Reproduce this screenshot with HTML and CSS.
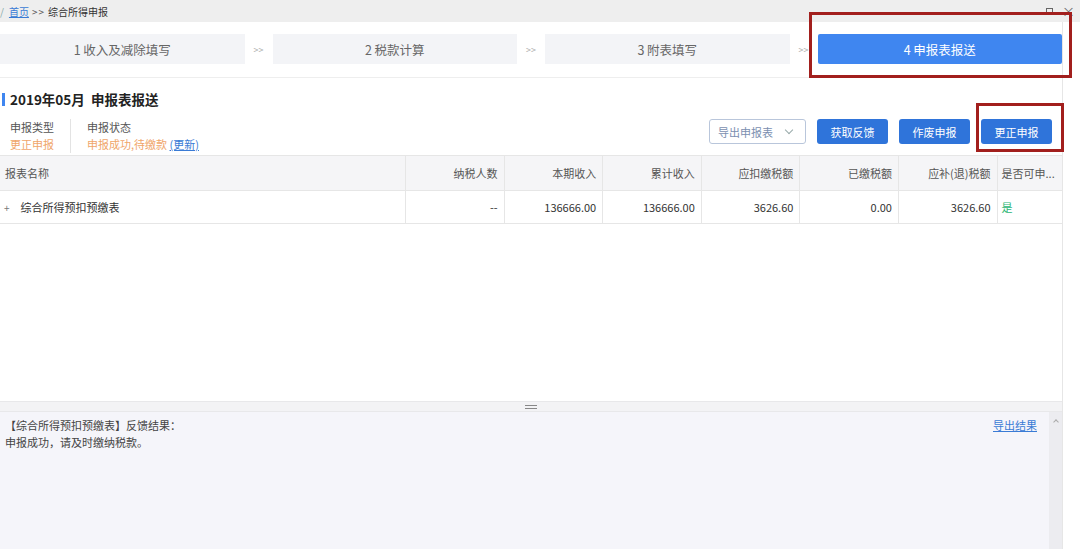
FILE: index.html
```html
<!DOCTYPE html>
<html lang="zh">
<head>
<meta charset="utf-8">
<link rel="stylesheet" href="styles.css">
</head>
<body>
<div class="topbar">
  <div class="crumbs"><span class="slash">/</span><a class="home">首页</a><span class="sep">&gt;&gt;</span><span>综合所得申报</span></div>
  <div class="winctl"><span class="max"></span><span class="close">×</span></div>
</div>
<div class="page">
  <div class="steps">
    <div class="step">1 收入及减除填写</div>
    <div class="arrow">&gt;&gt;</div>
    <div class="step">2 税款计算</div>
    <div class="arrow">&gt;&gt;</div>
    <div class="step">3 附表填写</div>
    <div class="arrow">&gt;&gt;</div>
    <div class="step active">4 申报表报送</div>
    <div class="mark mark-step"></div>
  </div>
  <div class="title"><span class="bar"></span>2019年05月&nbsp;&nbsp;申报表报送</div>
  <div class="info">
    <div class="field">
      <div class="lbl">申报类型</div>
      <div class="val">更正申报</div>
    </div>
    <div class="field sep-left">
      <div class="lbl">申报状态</div>
      <div class="val">申报成功,待缴款 <a class="update">(更新)</a></div>
    </div>
    <div class="actions">
      <div class="btn outline">导出申报表<span class="caret"></span></div>
      <div class="btn primary">获取反馈</div>
      <div class="btn primary">作废申报</div>
      <div class="btn primary">更正申报</div>
      <div class="mark mark-btn"></div>
    </div>
  </div>
  <div class="table">
    <div class="tr th">
      <div class="c c-name">报表名称</div>
      <div class="c c-n">纳税人数</div>
      <div class="c c-n">本期收入</div>
      <div class="c c-n">累计收入</div>
      <div class="c c-n">应扣缴税额</div>
      <div class="c c-n">已缴税额</div>
      <div class="c c-n">应补(退)税额</div>
      <div class="c c-last">是否可申...</div>
    </div>
    <div class="tr td">
      <div class="c c-name"><span class="plus">+</span>综合所得预扣预缴表</div>
      <div class="c c-n">--</div>
      <div class="c c-n">136666.00</div>
      <div class="c c-n">136666.00</div>
      <div class="c c-n">3626.60</div>
      <div class="c c-n">0.00</div>
      <div class="c c-n">3626.60</div>
      <div class="c c-last yes">是</div>
    </div>
  </div>
  <div class="blank"></div>
  <div class="splitter"><span class="grip"></span></div>
  <div class="result">
    <div class="result-text">
      <div class="line">【综合所得预扣预缴表】反馈结果：<a class="export">导出结果</a></div>
      <div class="line">申报成功，请及时缴纳税款。</div>
    </div>
    <div class="scroll"><span class="up"></span></div>
  </div>
</div>
</body>
</html>
```

FILE: styles.css
```css
* { box-sizing: border-box; }
html, body { margin: 0; padding: 0; }
body {
  width: 1080px;
  height: 549px;
  overflow: hidden;
  background: #ffffff;
  font-family: "Noto Sans CJK SC", "Noto Sans", sans-serif;
  color: #333;
}
a { text-decoration: none; }

.topbar {
  height: 22px;
  background: #eeeeee;
  display: flex;
  align-items: center;
  justify-content: space-between;
  font-size: 10px;
  color: #333;
}
.crumbs { display: flex; align-items: center; gap: 3px; }
.slash { color: #8aa; margin-right: 2px; }
.home { color: #3a7bd5; text-decoration: underline; }
.sep { color: #555; letter-spacing: 1px; }
.winctl { display: flex; align-items: center; gap: 9px; padding-right: 5px; color: #555; }
.max { width: 7px; height: 7px; border: 1.5px solid #666; }
.close { font-size: 13px; line-height: 10px; color: #666; }

.page {
  width: 1063px;
  border-right: 1px solid #e6e6e6;
  display: flex;
  flex-direction: column;
  height: 527px;
}

.steps {
  position: relative;
  display: flex;
  align-items: center;
  padding: 12px 0 13px;
  border-bottom: 1px solid #eeeeee;
  height: 56px;
}
.step {
  flex: 1;
  height: 30px;
  background: #f3f4f7;
  color: #666;
  font-size: 12.5px;
  display: flex;
  align-items: center;
  justify-content: center;
}
.step.active {
  background: #3f86f0;
  color: #fff;
  border-radius: 2px;
}
.arrow {
  width: 28px;
  text-align: center;
  font-size: 9px;
  color: #aaa;
}
.mark {
  position: absolute;
  border: 3px solid #a21f1d;
  pointer-events: none;
}
.mark-step { left: 809px; top: -10px; width: 263px; height: 66px; }

.title {
  display: flex;
  align-items: center;
  height: 40px;
  padding-top: 2px;
  font-size: 13.5px;
  font-weight: bold;
  color: #222;
  padding-left: 2px;
}
.bar {
  width: 3px;
  height: 13px;
  background: #3f86f0;
  margin-right: 5px;
}

.info {
  display: flex;
  align-items: flex-start;
  height: 37px;
  position: relative;
}
.field {
  padding-left: 10px;
  padding-right: 16px;
  font-size: 11px;
  line-height: 17px;
  margin-top: 1px;
}
.sep-left { border-left: 1px solid #e3e3e3; padding-left: 16px; margin-left: 0; }
.lbl { color: #555; }
.val { color: #f0a56a; }
.update { color: #3a7bd5; text-decoration: underline; }
.actions {
  margin-left: auto;
  display: flex;
  gap: 11px;
  padding-right: 10px;
  position: relative;
  padding-top: 1px;
}
.btn {
  height: 25px;
  width: 71px;
  border-radius: 3px;
  font-size: 11px;
  display: flex;
  align-items: center;
  justify-content: center;
}
.btn.primary { background: #2f74da; color: #fff; }
.btn.outline {
  width: 97px;
  border: 1px solid #b9c6db;
  color: #7b8fb0;
  background: #fff;
  justify-content: flex-start;
  padding-left: 8px;
}
.caret {
  width: 6px; height: 6px;
  border-right: 1px solid #9aa;
  border-bottom: 1px solid #9aa;
  transform: rotate(45deg);
  margin-left: 13px;
  margin-top: -3px;
}
.mark-btn { right: -2px; top: -15px; width: 88px; height: 49px; }

.table { font-size: 11px; color: #333; }
.tr { display: flex; border-top: 1px solid #e6e6e6; }
.th { height: 35px; background: #f5f5f7; color: #555; }
.td { height: 34px; border-bottom: 1px solid #e6e6e6; background: #fff; }
.c {
  display: flex;
  align-items: center;
  padding: 0 6px;
  border-right: 1px solid #e6e6e6;
}
.c-name { width: 406px; padding-left: 5px; }
.c-n { width: 98.6px; justify-content: flex-end; }
.c-last { flex: 1; border-right: none; padding-left: 4px; }
.td .c-name { padding-left: 4px; }
.plus { font-size: 10px; color: #777; margin-right: 11px; }
.yes { color: #2bb673; }

.blank { flex: 1; }

.splitter {
  height: 11px;
  background: #f3f3f5;
  border-top: 1px solid #e8e8ea;
  border-bottom: 1px solid #e8e8ea;
  display: flex;
  align-items: center;
  justify-content: center;
}
.grip {
  width: 12px;
  height: 4px;
  border-top: 1.5px solid #888;
  border-bottom: 1.5px solid #888;
}

.result {
  height: 137px;
  background: #f5f5fa;
  display: flex;
}
.result-text {
  flex: 1;
  padding: 5px 12px 0 5px;
  font-size: 11px;
  color: #444;
  line-height: 17px;
}
.line { display: flex; }
.export {
  margin-left: auto;
  color: #3a7bd5;
  text-decoration: underline;
}
.scroll {
  width: 13px;
  background: #ececf0;
  display: flex;
  justify-content: center;
  padding-top: 8px;
}
.up {
  width: 4px; height: 4px;
  border-left: 1px solid #aaa;
  border-top: 1px solid #aaa;
  transform: rotate(45deg);
}
```
